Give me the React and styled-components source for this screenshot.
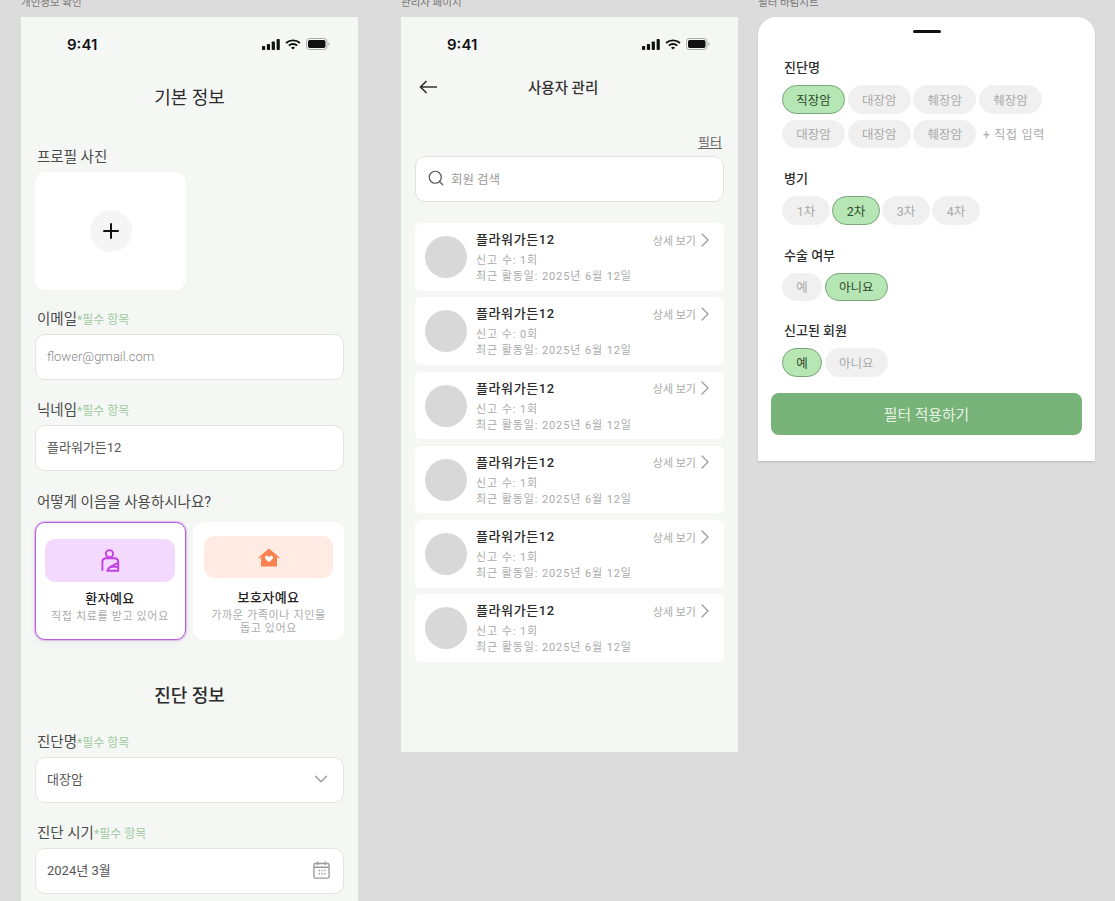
import React from "react";
import styled, { createGlobalStyle } from "styled-components";
import { ChevronDown, ChevronRight, Plus, Search } from "lucide-react";

const GlobalStyle = createGlobalStyle`
  html, body {
    margin: 0;
    height: 100%;
    overflow: hidden;
    background: #dcdcdc;
  }
  * {
    box-sizing: border-box;
  }
  body {
    font-family: Roboto, "Noto Sans CJK KR", "Liberation Sans", sans-serif;
    color: #2a2a2a;
  }
`;

const Page = styled.div`
  height: 901px;
  overflow: hidden;
  display: flex;
  align-items: flex-start;
  padding-left: 21px;
`;

const Column = styled.section`
  width: 337px;
  flex: none;
  margin-right: ${(p) => p.$gap || 0}px;
`;

const FrameLabel = styled.div`
  font-size: 10.5px;
  line-height: 14px;
  height: 14px;
  margin-top: -4px;
  margin-bottom: 7px;
  color: #777;
`;

const Phone = styled.div`
  background: #f5f7f5;
  height: ${(p) => p.$height}px;
  overflow: hidden;
`;

const StatusBar = styled.div`
  display: flex;
  align-items: center;
  justify-content: space-between;
  height: 20px;
  margin-top: 17px;
  padding: 0 28px 0 46px;
  font-family: "Inter", "Liberation Sans", sans-serif;
  font-size: 15px;
  font-weight: 600;
  color: #111;
`;

const ScreenTitle = styled.h2`
  height: 28px;
  margin: ${(p) => p.$top}px 0 0;
  padding-top: 2px;
  text-align: center;
  font-size: 18px;
  line-height: 28px;
  font-weight: ${(p) => (p.$strong ? 500 : 400)};
  color: #2c2c2c;
`;

const FormBody = styled.div`
  padding: 0 14px;
`;

const FieldLabel = styled.div`
  display: flex;
  align-items: baseline;
  height: 22px;
  margin-top: ${(p) => p.$top}px;
  padding: 2px 0 0 2px;
  font-size: 14.5px;
  line-height: 22px;
  color: #4a4a4a;
`;

const Required = styled.span`
  font-size: 12px;
  color: #9dcb9e;
`;

const PhotoBox = styled.div`
  width: 151px;
  height: 118px;
  margin-top: 5px;
  border-radius: 10px;
  background: #fff;
  display: flex;
  align-items: center;
  justify-content: center;
  box-shadow: 0 2px 12px rgba(0, 0, 0, 0.015);
`;

const PlusCircle = styled.div`
  width: 42px;
  height: 42px;
  border-radius: 50%;
  background: #f5f5f5;
  color: #111;
  display: flex;
  align-items: center;
  justify-content: center;
`;

const Input = styled.div`
  height: 46px;
  margin-top: 5px;
  padding: 0 11px ${(p) => (p.$muted ? 1 : 3)}px;
  border: 1px solid #e2e4e2;
  border-radius: 10px;
  background: #fff;
  display: flex;
  align-items: center;
  justify-content: space-between;
  font-size: 13px;
  font-weight: ${(p) => (p.$muted ? 300 : 400)};
  color: ${(p) => (p.$muted ? "#888" : "#555")};
`;

const RoleRow = styled.div`
  display: grid;
  grid-template-columns: 151px 151px;
  gap: 7px;
  margin-top: 10px;
`;

const RoleCard = styled.div`
  height: 118px;
  border-radius: 10px;
  background: #fff;
  border: 1px solid ${(p) => (p.$active ? "#b85fe0" : "#fff")};
  box-shadow: ${(p) =>
    p.$active ? "0 0 1px 1px rgba(184, 95, 224, 0.35), 0 2px 8px rgba(0, 0, 0, 0.05)" : "none"};
  padding: ${(p) => (p.$active ? "16px 10px 0 9px" : "13px 10px 0")};
  text-align: center;
`;

const RoleIcon = styled.div`
  height: ${(p) => p.$h}px;
  border-radius: 10px;
  background: ${(p) => p.$bg};
  display: flex;
  align-items: center;
  justify-content: center;
`;

const RoleName = styled.div`
  margin-top: ${(p) => p.$top}px;
  font-size: 13px;
  line-height: 20px;
  font-weight: 500;
  letter-spacing: 0.4px;
  color: #222;
`;

const RoleText = styled.div`
  font-size: 11px;
  line-height: 12.5px;
  letter-spacing: 0.65px;
  word-break: keep-all;
  color: #aaa;
  margin-top: 2px;
`;

const AdminBar = styled.div`
  display: flex;
  align-items: center;
  height: 28px;
  margin-top: 19px;
  padding-left: 18px;
  color: #333;
`;

const AdminTitle = styled.div`
  margin-left: 91px;
  padding-bottom: 2px;
  font-size: 14.5px;
  font-weight: 500;
  color: #333;
`;

const AdminBody = styled.div`
  padding: 0 14px;
`;

const FilterLink = styled.div`
  margin-top: 32px;
  padding: 0 2px 0 0;
  height: 20px;
  text-align: right;
  font-size: 13px;
  line-height: 20px;
  color: #666;
  text-decoration: underline;
`;

const SearchBox = styled.div`
  height: 46px;
  margin-top: 3px;
  padding: 0 0 2px 11px;
  border: 1px solid #e0e2e0;
  border-radius: 10px;
  background: #fff;
  display: flex;
  align-items: center;
  gap: 6px;
  font-size: 12.5px;
  color: #999;
`;

const UserList = styled.div`
  display: flex;
  flex-direction: column;
  gap: 6.8px;
  margin-top: 21px;
`;

const UserRow = styled.div`
  height: 67.5px;
  border-radius: 6px;
  background: #fff;
  display: flex;
  align-items: flex-start;
  padding: 8px 7px 0 10px;
`;

const Avatar = styled.div`
  width: 42px;
  height: 42px;
  margin-top: 5px;
  border-radius: 50%;
  background: #d8d8d8;
  flex: none;
`;

const UserInfo = styled.div`
  flex: 1;
  margin-left: 9px;
`;

const UserName = styled.div`
  font-size: 13px;
  line-height: 17px;
  font-weight: 500;
  letter-spacing: 0.6px;
  color: #2a2a2a;
  margin-bottom: 5px;
`;

const UserMeta = styled.div`
  font-size: 11px;
  line-height: 16px;
  letter-spacing: 0.9px;
  color: #aaa;
`;

const DetailLink = styled.div`
  display: flex;
  align-items: center;
  height: 17px;
  font-size: 11px;
  color: #aaa;
`;

const DetailChevron = styled(ChevronRight)`
  margin-left: -3px;
  color: #999;
`;

const Sheet = styled.div`
  height: 444px;
  background: #fff;
  border-radius: 18px 18px 0 0;
  box-shadow: 0 1px 2px rgba(0, 0, 0, 0.15);
  padding: 13px 13px 0;
`;

const Handle = styled.div`
  width: 28px;
  height: 3px;
  margin: 0 auto 25px;
  border-radius: 2px;
  background: #111;
`;

const Group = styled.div`
  padding-left: 11px;
  margin-bottom: ${(p) => p.$bottom}px;
`;

const GroupTitle = styled.div`
  height: 18px;
  padding: 1px 0 0 2px;
  margin-bottom: 9px;
  font-size: 13px;
  line-height: 18px;
  font-weight: 500;
  color: #2c2c2c;
`;

const ChipRow = styled.div`
  display: flex;
  flex-wrap: wrap;
  align-items: center;
  gap: 6px ${(p) => p.$gap || 2.7}px;
`;

const Chip = styled.div`
  width: ${(p) => p.$w}px;
  height: 28.5px;
  border-radius: 15px;
  display: flex;
  align-items: center;
  justify-content: center;
  font-size: 12.5px;
  background: ${(p) => (p.$on ? "#b6e6b3" : "#f0f0f0")};
  border: 1px solid ${(p) => (p.$on ? "#78a67a" : "#f0f0f0")};
  color: ${(p) => (p.$on ? "#2f4a30" : "#aaa")};
`;

const DirectInput = styled.div`
  margin-left: 4px;
  font-size: 12px;
  letter-spacing: 0.7px;
  color: #aaa;
`;

const ApplyButton = styled.div`
  height: 42px;
  border-radius: 8px;
  background: #78b37a;
  display: flex;
  align-items: center;
  justify-content: center;
  font-size: 14.8px;
  color: #e6f3e4;
`;

const StatusIconRow = styled.div`
  display: flex;
  align-items: center;
  gap: 5px;
`;

const CalendarSvg = styled.svg`
  margin-right: 2px;
`;

function StatusIcons() {
  return (
    <StatusIconRow>
      <svg width="18" height="11" viewBox="0 0 17 11" fill="#111" preserveAspectRatio="none">
        <rect x="0" y="7" width="3" height="4" rx="0.8" />
        <rect x="4.6" y="5" width="3" height="6" rx="0.8" />
        <rect x="9.2" y="2.5" width="3" height="8.5" rx="0.8" />
        <rect x="13.8" y="0" width="3" height="11" rx="0.8" />
      </svg>
      <svg width="16" height="11" viewBox="0 0 15 11" fill="none" stroke="#111" strokeWidth="1.8" preserveAspectRatio="none">
        <path d="M1 4a9.4 9.4 0 0 1 13 0" />
        <path d="M3.6 6.6a5.6 5.6 0 0 1 7.8 0" />
        <path d="M7.5 10.6 5.6 8.7a2.7 2.7 0 0 1 3.8 0z" fill="#111" stroke="none" />
      </svg>
      <svg width="24" height="12" viewBox="0 0 24 12">
        <rect x="0.5" y="0.5" width="20.5" height="11" rx="3" fill="none" stroke="#aaa" />
        <rect x="2" y="2" width="17.5" height="8" rx="1.8" fill="#111" />
        <path d="M22.4 4.2c.8.3 1.2 1 1.2 1.8s-.4 1.5-1.2 1.8z" fill="#aaa" />
      </svg>
    </StatusIconRow>
  );
}

function BackArrow() {
  return (
    <svg width="18" height="14" viewBox="0 0 18 14" fill="none" stroke="#333" strokeWidth="1.7">
      <path d="M18 7H1.500M7.500 1 1.500 7l6 6" />
    </svg>
  );
}

function PatientIcon() {
  return (
    <svg width="19" height="23" viewBox="0 0 19 23" fill="none" stroke="#c23fe8" strokeWidth="1.9">
      <circle cx="8.500" cy="4.700" r="3.600" />
      <path d="M1.400 16.500V13c0-2.300 1.600-3.700 3.800-3.700h8c2.400 0 4 1.500 4 3.700v8.800H5.500" />
      <path d="M1.400 16.500v5.300" />
      <path d="M17 13.800 9.800 17.600c-1.900 1-3 2-3 4.200" />
      <path d="M9.500 17.800h7.700" />
    </svg>
  );
}

function HouseIcon() {
  return (
    <svg width="22" height="19" viewBox="0 0 22 19">
      <path d="M11 .5 21.600 9.400l-.9 1L19 9V18.500H3V9L1.300 10.400l-.9-1z" fill="#f98350" />
      <path d="M11 14.200 7.600 10.900c-1.900-1.900.8-4.500 2.500-2.600l.9 1 .9-1c1.700-1.900 4.400.7 2.500 2.600z" fill="#fff" />
    </svg>
  );
}

function CalendarIcon() {
  return (
    <CalendarSvg width="17" height="18" viewBox="0 0 18 19" fill="none" stroke="#999" strokeWidth="1.400">
      <rect x="1" y="2.600" width="16" height="15.500" rx="1.500" />
      <path d="M1 6.600h16M5 .6v3.500M13 .6v3.500" />
      <path d="M6 10h1.400M9 10h1.400M12 10h1.400M6 13.500h1.400M9 13.500h1.400M12 13.500h1.400" strokeWidth="1.400" />
    </CalendarSvg>
  );
}

const users = ["1회", "0회", "1회", "1회", "1회", "1회"];

export default function App() {
  return (
    <>
      <GlobalStyle />
      <Page>
        <Column $gap={43}>
          <FrameLabel>개인정보 확인</FrameLabel>
          <Phone $height={890}>
            <StatusBar>
              <span>9:41</span>
              <StatusIcons />
            </StatusBar>
            <ScreenTitle $top={28}>기본 정보</ScreenTitle>
            <FormBody>
              <FieldLabel $top={35}>프로필 사진</FieldLabel>
              <PhotoBox>
                <PlusCircle>
                  <Plus size={24} strokeWidth={2} />
                </PlusCircle>
              </PhotoBox>
              <FieldLabel $top={17}>
                이메일<Required>*필수 항목</Required>
              </FieldLabel>
              <Input $muted>flower@gmail.com</Input>
              <FieldLabel $top={18}>
                닉네임<Required>*필수 항목</Required>
              </FieldLabel>
              <Input>플라워가든12</Input>
              <FieldLabel $top={19}>어떻게 이음을 사용하시나요?</FieldLabel>
              <RoleRow>
                <RoleCard $active>
                  <RoleIcon $bg="#f2d9fd" $h={43}>
                    <PatientIcon />
                  </RoleIcon>
                  <RoleName $top={7}>환자예요</RoleName>
                  <RoleText>직접 치료를 받고 있어요</RoleText>
                </RoleCard>
                <RoleCard>
                  <RoleIcon $bg="#ffebe3" $h={42}>
                    <HouseIcon />
                  </RoleIcon>
                  <RoleName $top={10}>보호자예요</RoleName>
                  <RoleText>가까운 가족이나 지인을 돕고 있어요</RoleText>
                </RoleCard>
              </RoleRow>
            </FormBody>
            <ScreenTitle $top={40} $strong>진단 정보</ScreenTitle>
            <FormBody>
              <FieldLabel $top={22}>
                진단명<Required>*필수 항목</Required>
              </FieldLabel>
              <Input>
                대장암
                <ChevronDown size={22} color="#999" strokeWidth={1.5} />
              </Input>
              <FieldLabel $top={18}>
                진단 시기<Required>*필수 항목</Required>
              </FieldLabel>
              <Input>
                2024년 3월
                <CalendarIcon />
              </Input>
            </FormBody>
          </Phone>
        </Column>

        <Column $gap={20}>
          <FrameLabel>관리자 페이지</FrameLabel>
          <Phone $height={735}>
            <StatusBar>
              <span>9:41</span>
              <StatusIcons />
            </StatusBar>
            <AdminBar>
              <BackArrow />
              <AdminTitle>사용자 관리</AdminTitle>
            </AdminBar>
            <AdminBody>
              <FilterLink>필터</FilterLink>
              <SearchBox>
                <Search size={18} color="#555" strokeWidth={1.6} />
                회원 검색
              </SearchBox>
              <UserList>
                {users.map((count, i) => (
                  <UserRow key={i}>
                    <Avatar />
                    <UserInfo>
                      <UserName>플라워가든12</UserName>
                      <UserMeta>신고 수: {count}</UserMeta>
                      <UserMeta>최근 활동일: 2025년 6월 12일</UserMeta>
                    </UserInfo>
                    <DetailLink>
                      상세 보기
                      <DetailChevron size={24} strokeWidth={1.200} />
                    </DetailLink>
                  </UserRow>
                ))}
              </UserList>
            </AdminBody>
          </Phone>
        </Column>

        <Column>
          <FrameLabel>필터 바텀시트</FrameLabel>
          <Sheet>
            <Handle />
            <Group $bottom={21}>
              <GroupTitle>진단명</GroupTitle>
              <ChipRow>
                <Chip $w={63} $on>직장암</Chip>
                <Chip $w={63}>대장암</Chip>
                <Chip $w={63}>췌장암</Chip>
                <Chip $w={63}>췌장암</Chip>
                <Chip $w={63}>대장암</Chip>
                <Chip $w={63}>대장암</Chip>
                <Chip $w={63}>췌장암</Chip>
                <DirectInput>+ 직접 입력</DirectInput>
              </ChipRow>
            </Group>
            <Group $bottom={21}>
              <GroupTitle>병기</GroupTitle>
              <ChipRow $gap={2}>
                <Chip $w={48}>1차</Chip>
                <Chip $w={48} $on>2차</Chip>
                <Chip $w={48}>3차</Chip>
                <Chip $w={48}>4차</Chip>
              </ChipRow>
            </Group>
            <Group $bottom={20}>
              <GroupTitle>수술 여부</GroupTitle>
              <ChipRow>
                <Chip $w={40}>예</Chip>
                <Chip $w={63} $on>아니요</Chip>
              </ChipRow>
            </Group>
            <Group $bottom={16}>
              <GroupTitle>신고된 회원</GroupTitle>
              <ChipRow>
                <Chip $w={40} $on>예</Chip>
                <Chip $w={63}>아니요</Chip>
              </ChipRow>
            </Group>
            <ApplyButton>필터 적용하기</ApplyButton>
          </Sheet>
        </Column>
      </Page>
    </>
  );
}
